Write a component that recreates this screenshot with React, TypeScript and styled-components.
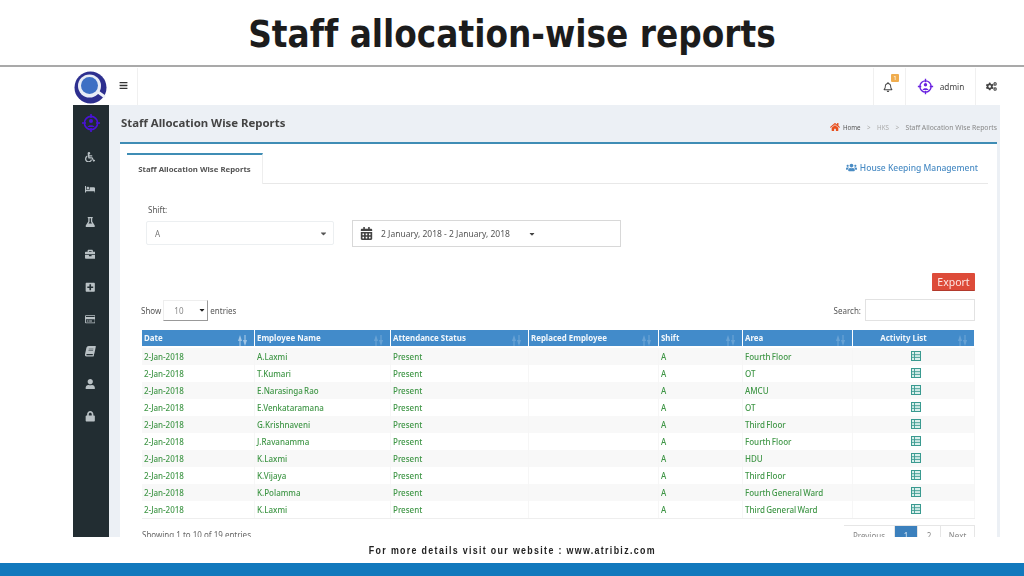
import React from "react";
import styled, { createGlobalStyle } from "styled-components";
import {
  FaBars, FaRegBell, FaCogs, FaHome, FaUsers, FaWheelchair, FaBed, FaFlask, FaBriefcase,
  FaPlusSquare, FaRegCreditCard, FaBook, FaUser, FaLock, FaCalendarAlt, FaCaretDown,
} from "react-icons/fa";

const Global = createGlobalStyle`
  html, body { margin: 0; padding: 0; background: #fff; }
  * { box-sizing: border-box; }
  #root { width: 1024px; height: 576px; overflow: hidden; }
`;

const Page = styled.div`
  width: 1024px; height: 576px; display: flex; flex-direction: column;
  font-family: "Noto Sans", sans-serif; background: #fff;
`;
const TitleBar = styled.div`
  height: 65px; display: flex; align-items: center; justify-content: center; padding-top: 3px;
`;
const Title = styled.h1`
  margin: 0; font: 700 36.5px "DejaVu Sans Condensed", "DejaVu Sans", sans-serif; font-stretch: condensed; color: #1c1c1c;
  font-variant-ligatures: none;
`;
const Rule = styled.div`height: 2px; margin-bottom: 1px; background: #a9a9a9; flex: none;`;
const Shot = styled.div`
  margin-left: 73px; width: 927px; height: 469px; flex: none; display: flex; overflow: hidden;
  filter: blur(0.35px);
`;
const Side = styled.div`width: 36px; flex: none; display: flex; flex-direction: column;`;
const LogoCell = styled.div`height: 37px; display: flex; align-items: flex-start; padding: 3px 0 0 1px;`;
const Nav = styled.div`
  flex: 1; background: #222d32; display: flex; flex-direction: column; align-items: center;
  color: #b9c1c5; padding-top: 2px;
`;
const NavBrand = styled.div`height: 32px; display: flex; align-items: center; justify-content: center;`;
const NavItem = styled.div`
  height: 32.4px; display: flex; align-items: center; justify-content: center; font-size: 10.5px;
  position: relative; top: 2px; left: -1px;
`;
const BookIcon = styled(FaBook)`transform: skewX(-12deg);`;
const Main = styled.div`flex: 1; display: flex; flex-direction: column; min-width: 0;`;
const Header = styled.div`height: 37px; flex: none; display: flex; align-items: stretch; background: #fff;`;
const Burger = styled.div`
  width: 29px; border-right: 1px solid #f0f0f0; display: flex; align-items: center; justify-content: center;
  font-size: 9px; color: #333; padding-bottom: 3px;
`;
const HeaderGap = styled.div`flex: 1;`;
const HeaderCell = styled.div<{ $w: number; $pl?: number; $pr?: number }>`
  width: ${(p) => p.$w}px; border-left: 1px solid #f0f0f0; display: flex; align-items: center; justify-content: center;
  gap: 6px; font-size: 8.2px; color: #444; position: relative;
  padding-left: ${(p) => p.$pl ?? 0}px; padding-right: ${(p) => p.$pr ?? 0}px;
`;
const Badge = styled.span`
  position: absolute; top: 6px; left: 17px; width: 8px; height: 8px; background: #f0ad4e; color: #fff;
  font-size: 6px; line-height: 8px; text-align: center; border-radius: 1px;
`;
const Content = styled.div`flex: 1; background: #ecf0f5; padding-left: 11px; padding-right: 3px; display: flex; flex-direction: column; min-height: 0;`;
const PageHead = styled.div`
  height: 39px; flex: none; display: flex; align-items: center; justify-content: space-between;
  border-bottom: 2px solid #3f8db5; padding-bottom: 1px;
`;
const PageTitle = styled.div`font-size: 11.4px; font-weight: 700; color: #444; margin: -2px 0 0 1px;`;
const Crumbs = styled.div`display: flex; align-items: center; gap: 6.5px; font-size: 6.2px; color: #aaa; margin-top: 8px;`;
const CrumbHome = styled.span`display: inline-flex; align-items: center; gap: 3px; color: #555; font-size: 6.2px;`;
const CrumbNow = styled.span`color: #888; font-size: 6.8px;`;
const Box = styled.div`flex: 1; background: #fff; padding: 9px 9px 0 7px; min-height: 0; display: flex; flex-direction: column;`;
const TabRow = styled.div`
  height: 31px; flex: none; display: flex; align-items: center; justify-content: space-between;
  border-bottom: 1px solid #e8e8e8; padding-right: 10px;
`;
const Tab = styled.div`
  width: 136px; height: 31px; border-top: 2px solid #3f8db5; background: #fff; border-right: 1px solid #eee;
  font-size: 7.8px; font-weight: 700; color: #555; display: flex; align-items: center; justify-content: center;
  margin-bottom: -1px; padding-bottom: 2px;
`;
const BoxLink = styled.div`display: flex; align-items: center; gap: 3px; font-size: 8.5px; font-weight: 500; color: #4a8cc4; padding-bottom: 2px;`;
const Filters = styled.div`display: flex; align-items: flex-end; gap: 18px; padding: 18px 0 0 19px; height: 61px; flex: none;`;
const FilterCol = styled.div`display: flex; flex-direction: column; gap: 6px;`;
const Label = styled.div`font-size: 8px; color: #555; line-height: 11px; padding-left: 2px;`;
const SelectBox = styled.div`
  width: 188px; height: 24px; border: 1px solid #eceff1; border-radius: 2px; display: flex; align-items: center;
  justify-content: space-between; padding: 0 5px 0 8px; font-size: 8px; color: #777;
`;
const DateBox = styled.div`
  width: 269px; height: 27px; border: 1px solid #d8d8d8; display: flex; align-items: center; font-size: 8.5px; color: #555;
  padding-left: 7px; gap: 8px; margin-bottom: -2px;
`;
const ExportRow = styled.div`display: flex; justify-content: flex-end; margin-top: 28px; padding-right: 13px; flex: none;`;
const ExportBtn = styled.div`
  width: 43px; height: 18px; background: #dd4b39; border-bottom: 1px solid #b23a2c; color: #fde8e4; font-size: 10.5px;
  display: flex; align-items: center; justify-content: center; border-radius: 1px;
`;
const ControlRow = styled.div`
  display: flex; justify-content: space-between; align-items: center; flex: none; height: 22px;
  margin: 8px 13px 0 14px; font-size: 8px; color: #555;
`;
const ControlGroup = styled.div`display: flex; align-items: center; gap: 2px;`;
const Entries = styled.div`
  width: 45px; height: 21px; border: 1px solid #eee; border-right: 1px solid #999; border-bottom: 1px solid #999;
  display: flex; align-items: center; justify-content: space-between; padding: 0 1px 0 10px; color: #888; font-size: 8px;
`;
const SearchBox = styled.div`width: 110px; height: 22px; border: 1px solid #e2e2e2; margin-left: 2px;`;
const Table = styled.table`
  border-collapse: separate; border-spacing: 0; table-layout: fixed; width: 833px; margin: 9px 0 0 15px; flex: none;
  font-size: 8px;
`;
const Th = styled.th<{ $center?: boolean }>`
  height: 18px; padding: 0 2px; background: #428bca; color: #f2f7fb; font-weight: 700; font-size: 7.9px; background-clip: padding-box;
  text-align: ${(p) => (p.$center ? "center" : "left")}; border-right: 1px solid #fff; border-bottom: 2px solid #fff;
  position: relative; overflow: hidden; white-space: nowrap; padding-right: ${(p) => (p.$center ? 22 : 2)}px;
`;
const Sort = styled.svg<{ $strong?: boolean }>`
  position: absolute; right: 6px; bottom: 0; opacity: ${(p) => (p.$strong ? 0.5 : 0.2)};
`;
const Tr = styled.tr<{ $odd: boolean }>`background: ${(p) => (p.$odd ? "#f8f8f8" : "#fff")};`;
const Td = styled.td<{ $center?: boolean }>`
  height: 17px; padding: ${(p) => (p.$center ? "0 0 0 4px" : "0 2px")}; color: #3f9646; white-space: nowrap; border-right: 1px solid #f6f6f6; font-weight: 500;
  text-align: ${(p) => (p.$center ? "center" : "left")}; line-height: 10px; word-spacing: -0.8px;
`;
const TableEnd = styled.div`width: 833px; height: 1px; margin-left: 15px; background: #eee; flex: none;`;
const Pager = styled.div`
  display: flex; justify-content: space-between; align-items: flex-start; margin: 6px 13px 0 15px; font-size: 8px; color: #666; flex: none;
`;
const ShowInfo = styled.div`margin-top: 4px;`;
const PagerBtns = styled.div`display: flex;`;
const PageBtn = styled.div<{ $on?: boolean; $w: number }>`
  width: ${(p) => p.$w}px; height: 24px; border: 1px solid #e6e6e6; border-left: 0; background: ${(p) => (p.$on ? "#3b80bd" : "#fff")};
  color: ${(p) => (p.$on ? "#dbe9f5" : "#888")}; display: flex; align-items: center; justify-content: center; padding-bottom: 4px;
`;
const FootNote = styled.div`
  height: 26px; flex: none; display: flex; align-items: center; justify-content: center;
`;
const FootText = styled.span`
  display: inline-block; white-space: nowrap; transform: scaleX(0.77);
  font: 700 11.5px "Liberation Sans", sans-serif; letter-spacing: 1.72px; color: #222;
`;
const BlueBar = styled.div`flex: 1; background: #1279bd;`;

const Logo = () => (
  <svg width="33" height="33" viewBox="0 0 33 33">
    <circle cx="16.5" cy="16.5" r="16" fill="#2d2f8f" />
    <circle cx="15.5" cy="15" r="11.5" fill="#e8ecf6" />
    <circle cx="15.5" cy="14.5" r="8.5" fill="#3d6fc4" />
    <path d="M24 21 L31 26" stroke="#eef1f8" strokeWidth="3" />
  </svg>
);
const Target = ({ size, color }: { size: number; color: string }) => (
  <svg width={size} height={size} viewBox="0 0 20 20" fill="none">
    <circle cx="10" cy="10" r="6.6" stroke={color} strokeWidth="1.6" />
    <path d="M10 1v4M10 15v4M1 10h4M15 10h4" stroke={color} strokeWidth="1.6" />
    <circle cx="10" cy="8" r="2" fill={color} />
    <path d="M6.5 14c.5-2.500 6.500-2.500 7 0z" fill={color} />
  </svg>
);
const SortMark = ({ strong }: { strong?: boolean }) => (
  <Sort $strong={strong} width="11" height="11" viewBox="0 0 11 11" fill="#fff">
    <path d="M3 0 1 6h1.400v5h1.200V6H5zM8 11l2-6H8.600V0H7.400v5H6z" />
  </Sort>
);
const ActivityIcon = () => (
  <svg width="10" height="10" viewBox="0 0 10 10" fill="none">
    <rect x="0.5" y="0.5" width="9" height="9" fill="#d9efec" stroke="#3a9a90" />
    <path d="M3.500 1v8M1 3.700h8M1 6.400h8" stroke="#3a9a90" strokeWidth="0.9" />
  </svg>
);

const rows = [
  ["A.Laxmi", "Fourth Floor"], ["T.Kumari", "OT"], ["E.Narasinga Rao", "AMCU"], ["E.Venkataramana", "OT"],
  ["G.Krishnaveni", "Third Floor"], ["J.Ravanamma", "Fourth Floor"], ["K.Laxmi", "HDU"], ["K.Vijaya", "Third Floor"],
  ["K.Polamma", "Fourth General Ward"], ["K.Laxmi", "Third General Ward"],
];
const cols: [string, number][] = [
  ["Date", 113], ["Employee Name", 136], ["Attendance Status", 138], ["Replaced Employee", 130], ["Shift", 84], ["Area", 110], ["Activity List", 122],
];
const navIcons = [FaWheelchair, FaBed, FaFlask, FaBriefcase, FaPlusSquare, FaRegCreditCard, BookIcon, FaUser, FaLock];

export default function App() {
  return (
    <Page>
      <Global />
      <TitleBar><Title>Staff allocation-wise reports</Title></TitleBar>
      <Rule />
      <Shot>
        <Side>
          <LogoCell><Logo /></LogoCell>
          <Nav>
            <NavBrand><Target size={20} color="#4a12d8" /></NavBrand>
            {navIcons.map((Icon, i) => <NavItem key={i}><Icon /></NavItem>)}
          </Nav>
        </Side>
        <Main>
          <Header>
            <Burger><FaBars /></Burger>
            <HeaderGap />
            <HeaderCell $w={32} $pr={4}><FaRegBell size={10} /><Badge>1</Badge></HeaderCell>
            <HeaderCell $w={70}><Target size={17} color="#6a22e0" />admin</HeaderCell>
            <HeaderCell $w={25} $pl={7}><FaCogs size={11} /></HeaderCell>
          </Header>
          <Content>
            <PageHead>
              <PageTitle>Staff Allocation Wise Reports</PageTitle>
              <Crumbs>
                <CrumbHome><FaHome size={10} color="#e8501e" />Home</CrumbHome>
                <span>&gt;</span><span>HKS</span><span>&gt;</span>
                <CrumbNow>Staff Allocation Wise Reports</CrumbNow>
              </Crumbs>
            </PageHead>
            <Box>
              <TabRow>
                <Tab>Staff Allocation Wise Reports</Tab>
                <BoxLink><FaUsers size={11} />House Keeping Management</BoxLink>
              </TabRow>
              <Filters>
                <FilterCol>
                  <Label>Shift:</Label>
                  <SelectBox>A<FaCaretDown size={9} color="#555" /></SelectBox>
                </FilterCol>
                <DateBox>
                  <FaCalendarAlt size={13} color="#444" />
                  2 January, 2018 - 2 January, 2018
                  <FaCaretDown size={8} color="#444" style={{ marginLeft: 10 }} />
                </DateBox>
              </Filters>
              <ExportRow><ExportBtn>Export</ExportBtn></ExportRow>
              <ControlRow>
                <ControlGroup>Show<Entries>10<FaCaretDown size={8} color="#222" /></Entries>entries</ControlGroup>
                <ControlGroup>Search:<SearchBox /></ControlGroup>
              </ControlRow>
              <Table>
                <colgroup>{cols.map(([n, w]) => <col key={n} width={w} />)}</colgroup>
                <thead>
                  <tr>
                    {cols.map(([n], i) => (
                      <Th key={n} $center={i === 6}>{n}<SortMark strong={i === 0} /></Th>
                    ))}
                  </tr>
                </thead>
                <tbody>
                  {rows.map(([name, area], i) => (
                    <Tr key={i} $odd={i % 2 === 0}>
                      <Td>2-Jan-2018</Td><Td>{name}</Td><Td>Present</Td><Td></Td><Td>A</Td><Td>{area}</Td>
                      <Td $center><ActivityIcon /></Td>
                    </Tr>
                  ))}
                </tbody>
              </Table>
              <TableEnd />
              <Pager>
                <ShowInfo>Showing 1 to 10 of 19 entries</ShowInfo>
                <PagerBtns>
                  <PageBtn $w={51}>Previous</PageBtn>
                  <PageBtn $w={23} $on>1</PageBtn>
                  <PageBtn $w={23}>2</PageBtn>
                  <PageBtn $w={34}>Next</PageBtn>
                </PagerBtns>
              </Pager>
            </Box>
          </Content>
        </Main>
      </Shot>
      <FootNote><FootText>For more details visit our website : www.atribiz.com</FootText></FootNote>
      <BlueBar />
    </Page>
  );
}
